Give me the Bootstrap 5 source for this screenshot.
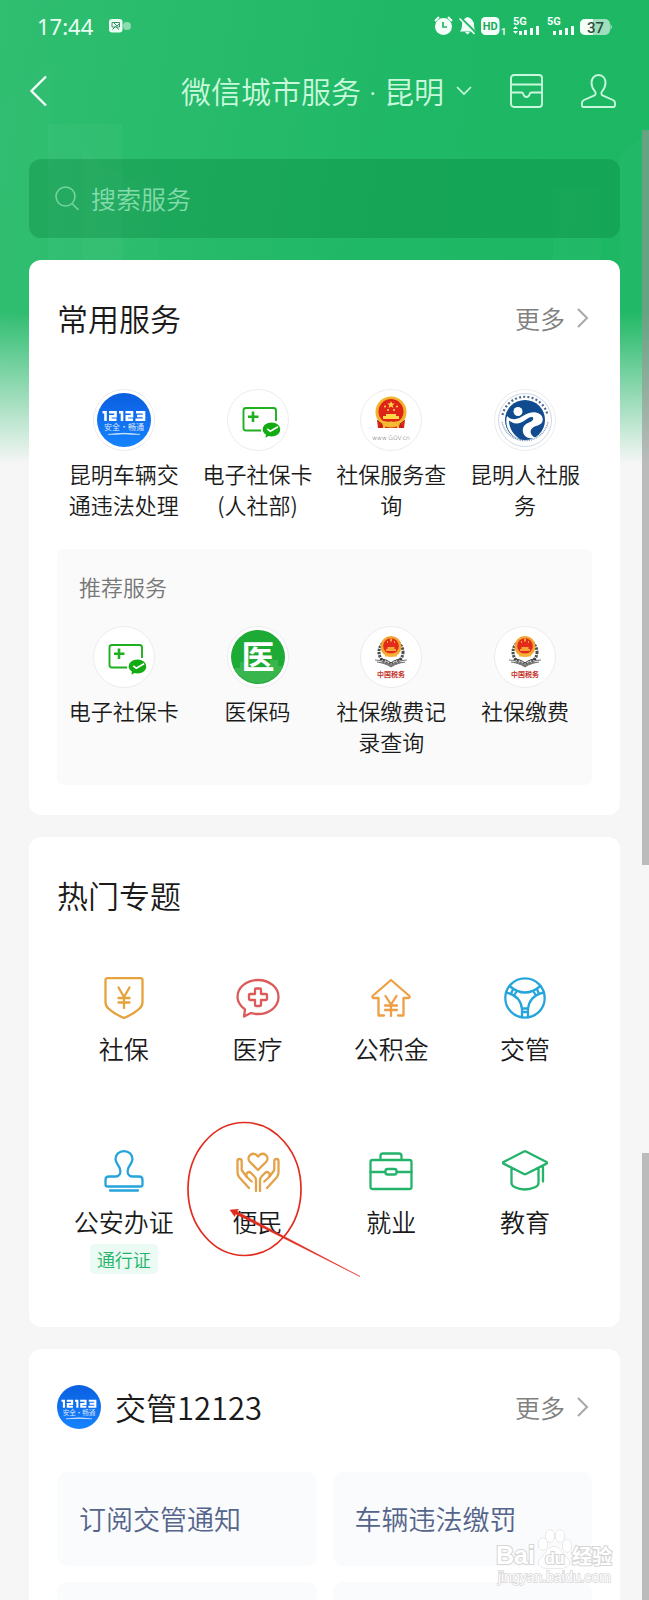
<!DOCTYPE html>
<html lang="zh-CN">
<head>
<meta charset="utf-8">
<meta name="viewport" content="width=device-width, initial-scale=1">
<title>微信城市服务 · 昆明</title>
<link rel="stylesheet" href="https://cdn.jsdelivr.net/npm/bootstrap@5.3.0/dist/css/bootstrap.min.css">
<style>
  body { font-family: "Noto Sans CJK SC", "Noto Sans", sans-serif; font-weight: 350; color: #1a1a1a; background: #f6f6f6; }
  a { color: inherit; text-decoration: none; }
  svg { display: block; flex: none; }
  .city-app { background: linear-gradient(to bottom, rgba(246,246,246,0) 312px, rgba(246,246,246,.5) 388px, #f6f6f6 464px), linear-gradient(100deg, #30be71, #1fb866 45%, #1bb762); }
  .skyline { top: 0; left: 0; }
  .status-bar { padding: 8px 36px 0 37px; height: 44px; color: #e9fff3; font: 400 22px/32px "Noto Sans", sans-serif; }
  .title-bar { padding: 0 33px 0 30px; margin-top: 24px; height: 46px; color: #c9f8dc; gap: 38px; }
  .title-btn { font-size: 30px; line-height: 46px; color: inherit; gap: 12px; font-weight: 350; }
  .title-btn .mid-dot { font-family: "Noto Sans", sans-serif; }
  .search-box { margin: 45px 29px 0; height: 79px; padding: 0 26px; gap: 12px; border-radius: 12px; background: rgba(0,120,50,.28); color: #74d3a0; }
  .search-box input { font-size: 25px; color: #fff; outline: 0; font-weight: 350; }
  .search-box input::placeholder { color: #84dbab; opacity: 1; }
  .panel { margin: 22px 29px 0; padding: 36px 28px 30px; border-radius: 12px; background: #fff; }
  .panel-topics { padding-bottom: 53px; }
  .panel h2 { font-size: 31px; line-height: 44px; font-weight: 350; margin: 0; }
  .panel-head { padding-right: 3px; }
  .more-link { font-size: 25px; line-height: 40px; color: #808080; gap: 11px; }
  .service { font-size: 22px; line-height: 31px; padding: 0 10px; }
  .service-icon { margin: 0 auto 7px; }
  .service-grid { margin-top: 49px; }
  .suggest { margin-top: 29px; padding: 22px 0 28px; border-radius: 6px; background: #fafafa; }
  .suggest h3 { margin: 0 0 24px 22px; font-size: 22px; line-height: 31px; font-weight: 350; color: #777; }
  .topic-grid { margin-top: 60px; row-gap: 84px; }
  .topic { font-size: 25px; line-height: 36px; }
  .topic-icon { margin: 0 auto 11px; fill: none; stroke-width: 2.3; stroke-linecap: round; stroke-linejoin: round; }
  .tag { width: 68px; margin: 5px auto 0; border-radius: 5px; font-size: 18px; line-height: 30px; color: #21b368; background: #ebfaf2; }
  .marking { left: -11px; top: -32px; }
  .head-logo { margin-right: 14px; }
  .tiles { margin-top: 43px; gap: 16px; }
  .tile { flex: 1 1 40%; height: 94px; padding-left: 22px; border-radius: 10px; background: #fafbfd; color: #55648a; font-size: 27px; line-height: 32px; }
  .scroll-thumb { right: 0; width: 7px; background: rgba(148,148,148,.6); }
  .thumb-a { top: 130px; height: 735px; }
  .thumb-b { top: 1153px; bottom: 0; }
  .watermark { right: 35px; bottom: 14px; }
</style>
</head>
<body>
<svg width="0" height="0" class="position-absolute">
  <defs>
    <linearGradient id="blue" x2="0" y2="1"><stop stop-color="#0a5fe0"/><stop offset="1" stop-color="#1683ff"/></linearGradient>
    <symbol id="logo-12123" viewBox="0 0 54 54">
      <circle cx="27" cy="27" r="27" fill="url(#blue)"/>
      <g fill="none" stroke="#fff" stroke-width="2.6"><path d="M5.500 19.300H8.500V28M12 19.300H18.500V23.300H13.300V26.700H19.500M22 19.300H25V28M28.500 19.300H35V23.300H29.800V26.700H36M39 19.300H47V26.700H38.500M40 23H47"/></g>
      <text x="27" y="37" font-size="8" fill="#e2efff" text-anchor="middle" font-family="'Noto Sans CJK SC'">安全·畅通</text>
      <path d="M11 41.500Q27 39 43 41.500Q27 40.500 11 41.500Z" fill="#fff" stroke="#cfe3ff" stroke-width=".6"/>
    </symbol>
    <symbol id="ring" viewBox="0 0 62 62"><circle cx="31" cy="31" r="30.500" fill="#fff" stroke="#ececec"/></symbol>
    <symbol id="e-card" viewBox="0 0 62 62">
      <path d="M34 41.500H19q-2.500 0-2.500-2.500V21.500q0-2.500 2.500-2.500H46.500q2.500 0 2.500 2.500V32" fill="none" stroke="#1eb01e" stroke-width="1.900"/>
      <path d="M26 22.500v10.500M21 27.700h10.500" stroke="#1eb01e" stroke-width="2.600"/>
      <path d="M44.500 33.500c5 0 8.700 3 8.700 7s-3.700 7-8.700 7c-1 0-2-.1-3-.4l-3 1.700.4-3.200c-2-1.300-3.200-3-3.200-5.100 0-4 3.800-7 8.800-7z" fill="#13ab13"/>
      <path d="M40.300 39.800l3 2.500 7.700-4.500" fill="none" stroke="#fff" stroke-width="1.700"/>
    </symbol>
    <symbol id="emblem" viewBox="0 0 32 34">
      <path d="M2 24h28l-1 8H3z" fill="#d9241c"/>
      <circle cx="16" cy="16" r="15.500" fill="#f2b32b"/>
      <circle cx="16" cy="15.500" r="12.500" fill="#de2318"/>
      <path d="M16 5l1 2.600h2.800l-2.200 1.700.8 2.700-2.400-1.600-2.400 1.600.8-2.700-2.200-1.700H15z" fill="#ffd84a"/>
      <g fill="#ffd84a"><circle cx="10" cy="10.500" r="1"/><circle cx="22" cy="10.500" r="1"/><circle cx="13" cy="14" r="1"/><circle cx="19" cy="14" r="1"/><path d="M11 18h10v2h3v3H8v-3h3z"/></g>
      <path d="M5 24.500c5 3 17 3 22 0M9 32v-2c4-3 10-3 14 0v2" fill="none" stroke="#f5bd35" stroke-width="2"/>
      <circle cx="16" cy="28" r="2.600" fill="#f5bd35"/><path d="M3 25l4 3-2 4M29 25l-4 3 2 4" stroke="#a8160f" fill="none"/>
    </symbol>
    <symbol id="tax" viewBox="0 0 62 62">
      <circle cx="31" cy="26" r="12" fill="none" stroke="#4b4f4b" stroke-width="3" stroke-dasharray="2.200 1"/>
      <path d="M15 34l5 .5c4 1 8 2.500 11 5 3-2.500 7-4 11-5l5-.5M17 36l4 .7c4 .8 7 2 10 4 3-2 6-3.200 10-4l4-.7" fill="none" stroke="#777" stroke-width="1.200"/>
      <path d="M20 33c4 0 8 1.500 11 4 3-2.500 7-4 11-4" fill="none" stroke="#333"/>
      <circle cx="31" cy="20.500" r="10.500" fill="#f4a431"/><circle cx="31" cy="20" r="7.800" fill="#e32b1b"/>
      <path d="M31 12.500v3M27 16h1M34 16h1M27.500 22h7M26 24h10" stroke="#ffd048" stroke-width="1.600"/>
      <path d="M25 29h12" stroke="#f7b235" stroke-width="3"/>
      <text x="31" y="50.500" font-size="7" font-weight="700" fill="#c5322c" text-anchor="middle" font-family="'Noto Sans CJK SC'">中国税务</text>
    </symbol>
  </defs>
</svg>

<div class="city-app position-relative vh-100 overflow-hidden">
  <svg class="skyline position-absolute w-100" height="330" fill="#fff" aria-hidden="true">
    <path d="M0 104L54 62V330H0z" opacity=".01"/>
    <path d="M48 124h74v206H48z" opacity=".03"/>
    <path d="M83 150l44 28h32v152H83z" opacity=".02"/>
    <path d="M620 156l29-26v200h-29zM553 188h48v142h-48z" opacity=".02"/>
  </svg>

  <div class="status-bar position-relative d-flex align-items-center">
    <span>17:44</span>
    <svg class="ms-3" width="22" height="16" viewBox="0 0 22 16">
      <rect x="0" y="1" width="13.500" height="13.500" rx="3" fill="#eafff3"/><path d="M3 4.500h7.500v4.500H3zM3.500 11.500l3-3 3.500 3M5 5l3 3 2-2" fill="none" stroke="#3c8f68"/><circle cx="18" cy="8" r="4" fill="#8edbb2"/>
    </svg>
    <svg class="ms-auto" width="179" height="20" viewBox="0 0 179 20" fill="#f3fff8" font-family="Roboto, sans-serif" font-weight="700">
      <circle cx="9.500" cy="10.500" r="8.500"/><path d="M1 5l4-4M18 5l-4-4" stroke="#f3fff8" stroke-width="2"/><path d="M9 6v5h4" fill="none" stroke="#1fb866" stroke-width="1.700"/>
      <path d="M26 15.500q2-2 2-6 0-6.500 5.500-8.500 6.500 2 6.500 8.500 0 4 2 6zM31 16h5l-2.500 2.500z"/><path d="M27 2l15.500 15" stroke="#1fb866" stroke-width="2"/><path d="M25.500 2.500l15 15.500" stroke="#f3fff8" stroke-width="1.500"/>
      <rect x="47" y="1" width="18.500" height="18" rx="4.500"/><text x="56.200" y="14" font-size="11" fill="#1da95d" text-anchor="middle">HD</text><text x="67" y="19" font-size="9">1</text>
      <text x="79" y="9" font-size="11">5G</text><path d="M79 13l2.500-3 2.500 3zM79 15h5l-2.500 3zM85 15h3v4h-3zM90 14h3v5h-3zM96 12h3v7h-3zM102 10h3v9h-3z"/>
      <text x="113" y="9" font-size="11">5G</text><path d="M119 15h3v4h-3zM125 14h3v5h-3zM131 12h3v7h-3zM137 10h3v9h-3z"/>
      <rect x="146" y="3" width="30" height="16" rx="5" fill="#9fdfbd"/><path d="M151 3h8v16h-8a5 5 0 0 1-5-5V8a5 5 0 0 1 5-5z"/><path d="M176.500 8q3 3 0 6z" fill="#9fdfbd"/>
      <text x="161.500" y="16.500" font-size="15" font-weight="500" fill="#2d4d3c" text-anchor="middle">37</text>
    </svg>
  </div>

  <header class="title-bar position-relative d-flex align-items-center">
    <a href="#" aria-label="返回"><svg width="17" height="32" viewBox="0 0 17 32" fill="none" stroke="#f3fff8" stroke-width="2.400"><path d="M16 1.500L1.500 16 16 30.500"/></svg></a>
    <button type="button" class="title-btn btn p-0 border-0 d-flex align-items-center ms-auto"><span>微信城市服务<span class="mid-dot"> · </span>昆明</span>
      <svg width="16" height="10" viewBox="0 0 16 10" fill="none" stroke="currentColor" stroke-width="1.700"><path d="M1 1l7 7 7-7"/></svg></button>
    <a href="#" aria-label="卡包"><svg width="33" height="34" viewBox="0 0 33 34" fill="none" stroke="currentColor" stroke-width="1.900"><rect x="1" y="1" width="31" height="32" rx="3"/><path d="M1 10.500h31M1 18.500h10.500q1.500 0 1.800 1.500 .8 3 3.200 3t3.200-3q.3-1.500 1.800-1.500H32"/></svg></a>
    <a href="#" aria-label="我的"><svg width="35" height="34" viewBox="0 0 35 34" fill="none" stroke="currentColor" stroke-width="1.900" stroke-linejoin="round"><path d="M17.500 1c4.500 0 7 3.500 7 8 0 3.500-1.500 6-3.500 8.500-1.300 1.600-.5 3.500 1 4.200l10 4.300q2 1 2 3v2.500q0 1.500-1.500 1.500h-30Q1 33 1 31.500V29q0-2 2-3l10-4.300c1.500-.7 2.300-2.600 1-4.200-2-2.500-3.500-5-3.500-8.500 0-4.500 2.500-8 7-8z"/></svg></a>
  </header>

  <label class="search-box position-relative d-flex align-items-center">
    <svg width="24" height="25" viewBox="0 0 24 25" fill="none" stroke="currentColor" stroke-width="1.600"><circle cx="10.500" cy="10.500" r="9.500"/><path d="M17 17.500l6.500 6.500"/></svg>
    <input type="search" class="border-0 bg-transparent p-0 flex-grow-1" placeholder="搜索服务" aria-label="搜索服务">
  </label>

  <section class="panel position-relative">
    <div class="panel-head d-flex justify-content-between align-items-center">
      <h2>常用服务</h2>
      <a href="#" class="more-link d-flex align-items-center">更多 <svg width="13" height="20" viewBox="0 0 13 20" fill="none" stroke="#a8a8a8" stroke-width="2"><path d="M2 1l9 9-9 9"/></svg></a>
    </div>
    <div class="service-grid row row-cols-4 g-0 text-center">
      <a href="#" class="service"><svg class="service-icon" width="62" height="62"><use href="#ring"/><use href="#logo-12123" x="4" y="4" width="54" height="54"/></svg>昆明车辆交通违法处理</a>
      <a href="#" class="service"><svg class="service-icon" width="62" height="62"><use href="#ring"/><use href="#e-card"/></svg>电子社保卡(人社部)</a>
      <a href="#" class="service"><svg class="service-icon" width="62" height="62"><use href="#ring"/><use href="#emblem" x="15" y="7" width="32" height="34"/><text x="31" y="51" font-size="6" fill="#555" text-anchor="middle" font-family="DejaVu Sans">www.GOV.cn</text></svg>社保服务查询</a>
      <a href="#" class="service"><svg class="service-icon" width="62" height="62"><use href="#ring"/>
        <circle cx="31" cy="31" r="26.500" fill="none" stroke="#b4c6d8" stroke-width=".7"/>
        <path d="M8.500 26a23 23 0 0 1 45 0" fill="none" stroke="#49688c" stroke-width="2.200" stroke-dasharray="2 2.200"/>
        <path d="M8 33a23.500 23.500 0 0 0 46 0" fill="none" stroke="#7d97b5" stroke-width="1.300" stroke-dasharray="1 .8"/>
        <circle cx="31" cy="31" r="20" fill="#114b8f"/>
        <circle cx="24" cy="22.500" r="4.500" fill="#fff"/>
        <path d="M13 27c4 4 9 4 14 1 5-3 9-5.500 15-4.500 6 1 8 6 6 10-2 3-6 3-9 5-4 3-3 8 3 10.500-7 1.500-12-1-13-6-1-5 2-8 6-9.500 3-1 5-3 4-5-3-2-7 3-12 5-6 2.500-9 0-12-2 0 8 5 15 11 18.500-9-2-16-12-13-23z" fill="#fff"/></svg>昆明人社服务</a>
    </div>
    <div class="suggest">
      <h3>推荐服务</h3>
      <div class="row row-cols-4 g-0 text-center">
        <a href="#" class="service"><svg class="service-icon" width="62" height="62"><use href="#ring"/><use href="#e-card"/></svg>电子社保卡</a>
        <a href="#" class="service"><svg class="service-icon" width="62" height="62"><use href="#ring"/><circle cx="31" cy="31" r="27" fill="#1dab35"/><path d="M8 42h5v-6h6v6h24v-8h8v6h5a27 27 0 0 1-48 4z" fill="#fff" opacity=".12"/><text x="31" y="43" font-size="33" font-weight="700" fill="#fff" text-anchor="middle" font-family="'Noto Sans CJK SC'">医</text></svg>医保码</a>
        <a href="#" class="service"><svg class="service-icon" width="62" height="62"><use href="#ring"/><use href="#tax"/></svg>社保缴费记录查询</a>
        <a href="#" class="service"><svg class="service-icon" width="62" height="62"><use href="#ring"/><use href="#tax"/></svg>社保缴费</a>
      </div>
    </div>
  </section>

  <section class="panel panel-topics position-relative">
    <h2>热门专题</h2>
    <div class="topic-grid row row-cols-4 g-0 text-center">
      <a href="#" class="topic"><svg class="topic-icon" width="46" height="42" viewBox="0 0 46 42" stroke="#e6a23c"><path d="M6.500 1.200h33q2 0 2 2v22q0 4-3 6.500-6 5.500-15.500 9.300-9.500-3.800-15.500-9.300-3-2.500-3-6.500V3.200q0-2 2-2z"/><path d="M17.500 10.500L23 20l5.500-9.500M17.500 21h11M17.500 25.500h11M23 20v11"/></svg>社保</a>
      <a href="#" class="topic"><svg class="topic-icon" width="46" height="42" viewBox="0 0 46 42" stroke="#dc5a5a"><path d="M23 3c11.500 0 20.500 7.500 20.500 17S34.500 37 23 37q-4 0-7-1l-7 3.500 1-7C5.500 29 2.500 25 2.500 20 2.500 10.500 11.500 3 23 3z"/><path d="M20 12.500q0-1 1-1h4q1 0 1 1V17h5q1 0 1 1v4q0 1-1 1h-5v5q0 1-1 1h-4q-1 0-1-1v-5h-5q-1 0-1-1v-4q0-1 1-1h5z"/></svg>医疗</a>
      <a href="#" class="topic"><svg class="topic-icon" width="46" height="42" viewBox="0 0 46 42" stroke="#ed9f45"><path d="M16 38.500h-5.500V21H5q-1-1-.5-2L23 3l18.500 16q.5 1-.5 2h-5.500v17.500H30"/><path d="M17.500 19l5.500 8.500 5.500-8.500M17 28.500h12M17 33h12M23 28v11"/></svg>公积金</a>
      <a href="#" class="topic"><svg class="topic-icon" width="46" height="42" viewBox="0 0 46 42" stroke="#25a5dc"><circle cx="23" cy="21" r="19.700"/><path d="M7.500 9q15.500 13 31 0M4 15.500q14.500 3 16 16.500v8.500M42 15.500q-14.500 3-16 16.500v8.500M11 12l-2 5M14.500 14.500L12 18.500M35 12l2 5M31.500 14.500l2.500 4M20.500 31.500h5M20.500 35h5"/></svg>交管</a>
      <a href="#" class="topic"><svg class="topic-icon" width="46" height="42" viewBox="0 0 46 42" stroke="#26a4dc"><path d="M23 1.200c5 0 8.500 3.300 8.500 7.800 0 4-3.500 6.500-4.500 10-1 4 0 7 4 7.500h7q3.500 0 3.500 3.500v4.500q0 2-2 2h-33q-2 0-2-2V30q0-3.500 3.500-3.500h7c4-.5 5-3.500 4-7.500-1-3.500-4.500-6-4.500-10C14.500 4.500 18 1.200 23 1.200zM9 40.500h28"/></svg>公安办证<span class="tag d-block">通行证</span></a>
      <a href="#" class="topic position-relative"><svg class="topic-icon" width="46" height="42" viewBox="0 0 46 42" stroke="#e3a247"><path d="M23 20L14.500 11.500C11 6 18 .5 23 6.500 28 .5 35 6 31.500 11.500z"/><path d="M14 38L4 27q-1.500-2-1.500-5V11q0-2 2-2t2.200 2V20l5 7 5 4.500M12 23q2-2 4 0l3.500 3.500q1.500 1.500 1.500 4V41M12 23q-1.500 1.500 0 3.500M32 38l10-11q1.500-2 1.500-5V11q0-2-2-2t-2.200 2V20l-5 7-5 4.500M34 23q-2-2-4 0l-3.500 3.500q-1.500 1.500-1.500 4V41M34 23q1.500 1.500 0 3.500"/></svg>便民
        <svg class="marking position-absolute" width="182" height="162" viewBox="0 0 182 162" aria-hidden="true"><ellipse cx="64.500" cy="71" rx="56.500" ry="66.500" fill="none" stroke="#e12d20" stroke-width="1.700"/><path d="M50 92l8.500-.8-1.500 2.300L180 158.500 55.500 96l-.8 2.500z" fill="#e12d20" stroke="#e12d20" stroke-width=".5"/></svg></a>
      <a href="#" class="topic"><svg class="topic-icon" width="46" height="42" viewBox="0 0 46 42" stroke="#23b36b"><rect x="2.500" y="10" width="41" height="29" rx="2"/><path d="M12.500 9.500V6q0-2.500 2.500-2.500h16q2.500 0 2.500 2.500v3.500M2.500 22H17M29 22h14.500"/><rect x="17.500" y="19" width="11" height="5.500" rx="2"/></svg>就业</a>
      <a href="#" class="topic"><svg class="topic-icon" width="46" height="42" viewBox="0 0 46 42" stroke="#23b36b"><path d="M22 1.500q1-.5 2 0L44.500 12q1 .8 0 1.600L24 24q-1 .5-2 0L1.500 13.600q-1-.8 0-1.600zM9.500 19v14q0 2.500 3 4 10 5 21 0 3-1.500 3-4V18M41 16.500v15"/></svg>教育</a>
    </div>
  </section>

  <section class="panel position-relative">
    <div class="panel-head d-flex align-items-center">
      <svg class="head-logo" width="44" height="44"><use href="#logo-12123" width="44" height="44"/></svg>
      <h2>交管12123</h2>
      <a href="#" class="more-link d-flex align-items-center ms-auto">更多 <svg width="13" height="20" viewBox="0 0 13 20" fill="none" stroke="#a8a8a8" stroke-width="2"><path d="M2 1l9 9-9 9"/></svg></a>
    </div>
    <div class="tiles d-flex flex-wrap">
      <a href="#" class="tile d-flex align-items-center">订阅交管通知</a>
      <a href="#" class="tile d-flex align-items-center">车辆违法缴罚</a>
      <a href="#" class="tile" aria-label="更多服务"></a>
      <a href="#" class="tile" aria-label="更多服务"></a>
    </div>
  </section>

  <div class="scroll-thumb thumb-a position-absolute"></div>
  <div class="scroll-thumb thumb-b position-absolute"></div>

  <svg class="watermark position-absolute" width="118" height="58" viewBox="0 0 118 58" fill="#fff" stroke="#d6d6d6" paint-order="stroke" font-family="'Liberation Sans', 'Noto Sans CJK SC', sans-serif">
    <text x="0" y="36" font-size="25" font-weight="700" stroke-width="2">Bai</text>
    <path d="M58 19c7 0 8 7 13 11 5 5 2 10-5 10-5 0-11 0-16 0-7 0-10-5-5-10 5-4 6-11 13-11z"/>
    <ellipse cx="47" cy="16" rx="4.500" ry="6"/><ellipse cx="54" cy="8" rx="4.500" ry="6"/><ellipse cx="64" cy="8" rx="4.500" ry="6"/><ellipse cx="71" cy="18" rx="4.500" ry="6"/>
    <text x="49" y="36" font-size="16" font-weight="700" stroke-width="2">du</text>
    <text x="76" y="36" font-size="20" font-weight="700" stroke-width="2" font-family="'Noto Sans CJK SC'">经验</text>
    <text x="2" y="54" font-size="14" stroke-width="1.500">jingyan.baidu.com</text>
  </svg>
</div>
<script src="https://cdn.jsdelivr.net/npm/bootstrap@5.3.0/dist/js/bootstrap.bundle.min.js"></script>
</body>
</html>
